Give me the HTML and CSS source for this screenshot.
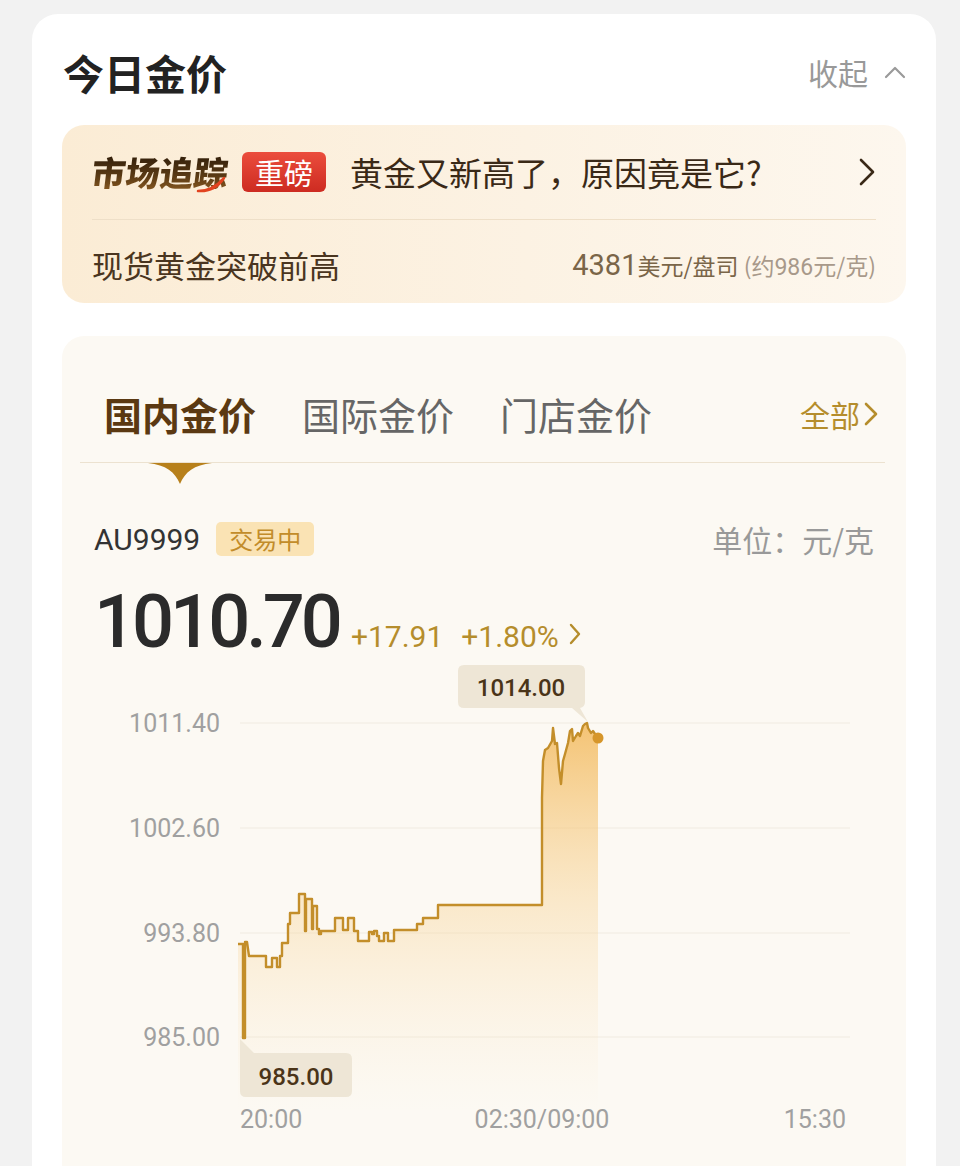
FILE: index.html
```html
<!DOCTYPE html>
<html lang="zh-CN">
<head>
  <meta charset="UTF-8">
  <meta name="viewport" content="width=device-width, initial-scale=1.0">
  <title>今日金价</title>
  <link rel="stylesheet" href="styles.css">
</head>
<body>
<div class="page">
  <section class="card">
    <header class="card-head">
      <h1 class="title">今日金价</h1>
      <div class="collapse">
        <span>收起</span>
        <svg width="22" height="14" viewBox="0 0 22 14"><path d="M2 12 L11 3 L20 12" fill="none" stroke="#9a9a9a" stroke-width="2.2" stroke-linecap="round" stroke-linejoin="round"/></svg>
      </div>
    </header>

    <div class="news">
      <div class="news-top">
        <span class="logo">
          <span class="logo-text">市场追踪</span>
          <svg class="logo-swoosh" width="30" height="18" viewBox="0 0 30 18"><path d="M2 16 C 11 16, 20 12, 28 3 C 23 11, 14 17, 2 16 Z" fill="#e2431f" stroke="#e2431f" stroke-width="2.5" stroke-linejoin="round"/></svg>
        </span>
        <span class="badge-hot">重磅</span>
        <span class="headline">黄金又新高了，原因竟是它?</span>
        <svg width="18" height="30" viewBox="0 0 18 30"><path d="M3 3 L15 15 L3 27" fill="none" stroke="#3a2917" stroke-width="2.6" stroke-linecap="round" stroke-linejoin="round"/></svg>
      </div>
      <div class="news-bottom">
        <span class="spot">现货黄金突破前高</span>
        <span class="spot-price"><span class="num big">4381</span>美元/盘司 <span class="approx">(约<span class="num">986</span>元/克)</span></span>
      </div>
    </div>

    <div class="market">
      <nav class="tabs">
        <span class="tab active">国内金价</span>
        <span class="tab">国际金价</span>
        <span class="tab">门店金价</span>
        <span class="all">全部
          <svg width="14" height="26" viewBox="0 0 14 26"><path d="M2 3 L12 13 L2 23" fill="none" stroke="#b58d2c" stroke-width="2.6" stroke-linecap="round" stroke-linejoin="round"/></svg>
        </span>
      </nav>
      <svg class="pointer" width="64" height="21" viewBox="0 0 64 21"><path d="M0 0 H64 C 46 2, 37 9, 32 21 C 27 9, 18 2, 0 0 Z" fill="#b7801b"/></svg>

      <div class="quote-head">
        <span class="code">AU9999</span>
        <span class="status">交易中</span>
        <span class="unit">单位：元/克</span>
      </div>

      <div class="quote-price">
        <span class="price">1010.70</span>
        <span class="change">+17.91</span>
        <span class="change pct">+1.80%
          <svg width="14" height="26" viewBox="0 0 14 26"><path d="M3 4 L11 13 L3 22" fill="none" stroke="#b58d2c" stroke-width="2.4" stroke-linecap="round" stroke-linejoin="round"/></svg>
        </span>
      </div>

      <svg class="chart" width="844" height="508" viewBox="62 658 844 508">
        <defs>
          <linearGradient id="area" gradientUnits="userSpaceOnUse" x1="0" y1="720" x2="0" y2="1110">
            <stop offset="0" stop-color="#f2b552" stop-opacity="0.8"/>
            <stop offset="0.45" stop-color="#f7d08e" stop-opacity="0.42"/>
            <stop offset="1" stop-color="#fbe6c4" stop-opacity="0"/>
          </linearGradient>
        </defs>
        <g class="grid">
          <line x1="240" y1="722" x2="850" y2="722"/>
          <line x1="240" y1="827" x2="850" y2="827"/>
          <line x1="240" y1="932" x2="850" y2="932"/>
          <line x1="240" y1="1036" x2="850" y2="1036"/>
        </g>
        <g class="axis-y">
          <text x="220" y="731">1011.40</text>
          <text x="220" y="836">1002.60</text>
          <text x="220" y="941">993.80</text>
          <text x="220" y="1045">985.00</text>
        </g>
        <g class="axis-x">
          <text x="240" y="1127">20:00</text>
          <text x="542" y="1127" text-anchor="middle">02:30/09:00</text>
          <text x="846" y="1127" text-anchor="end">15:30</text>
        </g>
        <path class="area" d="M238 943 H243 V1037 H245 V941 H247 L249 955 H266 V966 H272 V957 H277 V966 H280 V955 H282 V942 H288 V923 H290 V912 H299 V893 H305 V930 H306 V898 H312 V928 H313 V905 H317 V928 H319 V933 H321 V930 H335 V917 H343 V929 H348 V917 H354 V930 H358 V940 H369 V931 H372 V933 H374 V930 H377 V935 H379 V940 H384 V932 H388 V940 H394 V929 H417 V923 H423 V917 H438 V904 H542 V797 L543 760 L545 749 L548 747 L552 740 L553 727 L555 743 L557 742 L559 767 L561 783 L563 760 L565 753 L568 742 L570 730 L572 728 L573 740 L576 735 L578 732 L580 735 L583 725 L585 723 L587 722 L588 727 L591 732 L593 730 L595 733 L598 737 L598 1120 L238 1120 Z"/>
        <path class="line" d="M238 943 H243 V1037 H245 V941 H247 L249 955 H266 V966 H272 V957 H277 V966 H280 V955 H282 V942 H288 V923 H290 V912 H299 V893 H305 V930 H306 V898 H312 V928 H313 V905 H317 V928 H319 V933 H321 V930 H335 V917 H343 V929 H348 V917 H354 V930 H358 V940 H369 V931 H372 V933 H374 V930 H377 V935 H379 V940 H384 V932 H388 V940 H394 V929 H417 V923 H423 V917 H438 V904 H542 V797 L543 760 L545 749 L548 747 L552 740 L553 727 L555 743 L557 742 L559 767 L561 783 L563 760 L565 753 L568 742 L570 730 L572 728 L573 740 L576 735 L578 732 L580 735 L583 725 L585 723 L587 722 L588 727 L591 732 L593 730 L595 733 L598 737"/>
        <circle cx="598" cy="737" r="5.5" fill="#d6962a"/>

        <!-- high / low labels -->
        <path class="tip" d="M464 664 H579 Q585 664 585 670 V701 Q585 706 580 707 L588 721 L572 707 H464 Q458 707 458 701 V670 Q458 664 464 664 Z"/>
        <text class="tip-text" x="521" y="695" text-anchor="middle">1014.00</text>
        <path class="tip" d="M240 1038 L254 1052 H346 Q352 1052 352 1058 V1090 Q352 1096 346 1096 H246 Q240 1096 240 1090 Z"/>
        <text class="tip-text" x="296" y="1084" text-anchor="middle">985.00</text>
      </svg>
    </div>
  </section>
</div>
</body>
</html>
```

FILE: styles.css
```css
body {
  margin: 0;
  background: #f2f2f2;
  font-family: "Noto Sans CJK SC", sans-serif;
}
.page {
  height: 1166px;
  padding: 14px 24px 0 32px;
  box-sizing: border-box;
  overflow: hidden;
}
.card {
  height: 100%;
  background: #fff;
  border-radius: 26px 26px 0 0;
  padding: 0 30px;
}
.card-head {
  display: flex;
  align-items: center;
  justify-content: space-between;
  padding: 36px 0 31px 1px;
}
.title {
  margin: 0;
  font-size: 41px;
  line-height: 44px;
  font-weight: 700;
  color: #222;
}
.collapse {
  display: flex;
  align-items: center;
  gap: 16px;
  font-size: 30px;
  line-height: 44px;
  color: #999;
}

/* market tracking banner */
.news {
  height: 178px;
  box-sizing: border-box;
  padding: 0 30px;
  border-radius: 22px;
  background: linear-gradient(90deg, #fbecd5 0%, #fcf2e3 55%, #fdf7ee 100%);
}
.news-top {
  display: flex;
  align-items: center;
  height: 94px;
  border-bottom: 1px solid #eedfc8;
}
.logo {
  position: relative;
  display: inline-block;
}
.logo-text {
  display: inline-block;
  font-size: 34px;
  line-height: 40px;
  font-weight: 900;
  transform: skewX(-7deg);
  background: linear-gradient(180deg, #2b1a08 0%, #5a3a14 60%, #8a5a22 100%);
  -webkit-background-clip: text;
  background-clip: text;
  color: transparent;
}
.logo-swoosh {
  position: absolute;
  right: 2px;
  bottom: -1px;
}
.badge-hot {
  margin-left: 14px;
  height: 40px;
  padding: 0 13px;
  border-radius: 6px;
  background: linear-gradient(180deg, #eb4d3d, #cd2b21);
  color: #fff;
  font-size: 29px;
  line-height: 40px;
}
.headline {
  flex: 1;
  margin-left: 24px;
  font-size: 33px;
  color: #3a2917;
}
.news-bottom {
  display: flex;
  align-items: center;
  justify-content: space-between;
  height: 83px;
  padding-top: 6px;
  box-sizing: border-box;
}
.spot {
  font-size: 31px;
  color: #4a3520;
}
.spot-price {
  font-size: 23px;
  color: #7a6548;
}
.num {
  font-family: Roboto, "Noto Sans CJK SC", sans-serif;
}
.num.big {
  font-size: 29px;
}
.approx {
  color: #a8998a;
}

/* price card */
.market {
  margin-top: 33px;
  height: 900px;
  border-radius: 22px;
  background: #fcf9f3;
}
.tabs {
  display: flex;
  align-items: center;
  margin: 0 21px 0 18px;
  padding: 56px 7px 26px 24px;
  border-bottom: 1px solid #ece2d0;
}
.tab {
  margin-right: 46px;
  font-size: 38px;
  line-height: 44px;
  color: #666;
}
.tab.active {
  font-weight: 700;
  color: #5b3912;
}
.all {
  display: flex;
  align-items: center;
  gap: 4px;
  margin-left: auto;
  font-size: 30px;
  color: #b58d2c;
}
.pointer {
  display: block;
  margin-left: 86px;
}
.quote-head {
  display: flex;
  align-items: center;
  height: 34px;
  margin: 38px 32px 0;
}
.code {
  font-family: Roboto, sans-serif;
  font-size: 30px;
  color: #333;
}
.status {
  margin-left: 16px;
  padding: 0 13px;
  border-radius: 5px;
  background: #fae3b4;
  color: #c28c2a;
  font-size: 24px;
  line-height: 34px;
}
.unit {
  margin-left: auto;
  font-size: 30px;
  color: #999;
}
.quote-price {
  display: flex;
  align-items: baseline;
  margin: 29px 32px 0;
}
.price {
  font-family: Roboto, sans-serif;
  font-size: 74px;
  line-height: 74px;
  font-weight: 500;
  letter-spacing: -4px;
  color: #2b2b2b;
}
.change {
  margin-left: 12px;
  font-family: Roboto, sans-serif;
  font-size: 30px;
  color: #b58d2c;
}
.change.pct {
  margin-left: 18px;
}
.change svg {
  margin-left: 2px;
}

/* chart */
.chart {
  display: block;
}
.grid line {
  stroke: #f0ebe1;
  stroke-width: 1;
}
.axis-y text,
.axis-x text {
  font-family: Roboto, sans-serif;
  font-size: 25px;
  fill: #a0a0a0;
}
.axis-y text {
  text-anchor: end;
}
.area {
  fill: url(#area);
}
.line {
  fill: none;
  stroke: #c38e2a;
  stroke-width: 2.4;
  stroke-linejoin: round;
}
.tip {
  fill: #eee6d6;
}
.tip-text {
  font-family: Roboto, sans-serif;
  font-size: 24px;
  font-weight: 500;
  fill: #4a3418;
}
```
